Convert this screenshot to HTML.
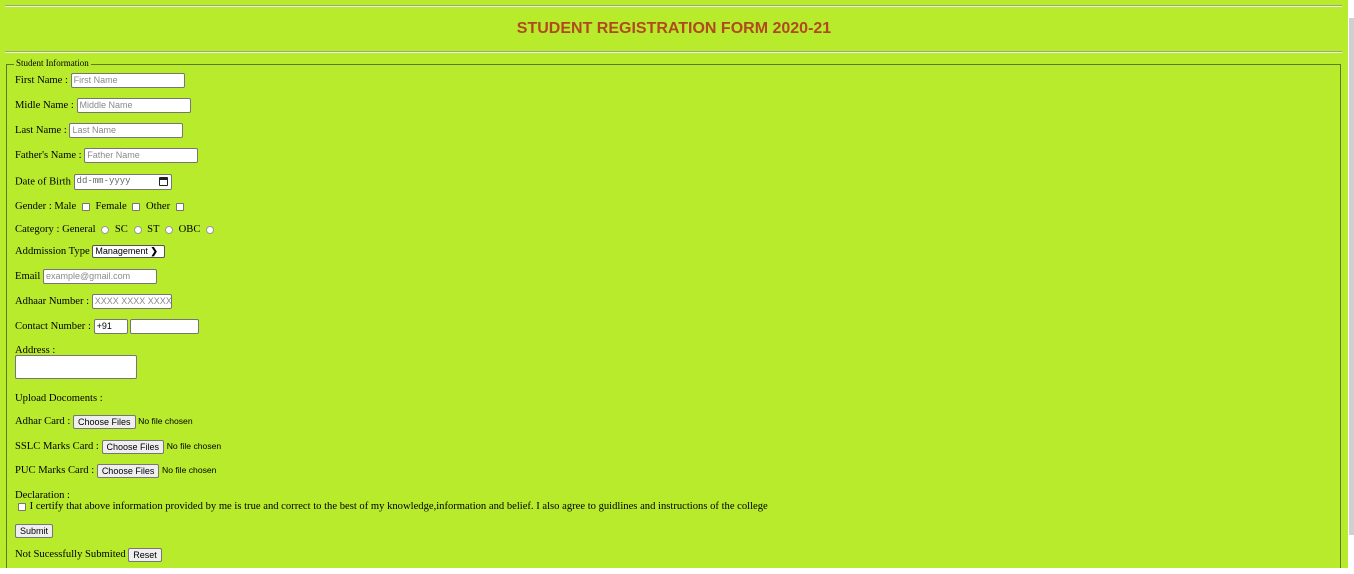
<!DOCTYPE html>
<html><head><meta charset="utf-8"><style>
*{box-sizing:border-box;margin:0;padding:0}
html,body{width:1354px;height:574px;overflow:hidden;background:#fff}
#pg{position:absolute;left:0;top:0;width:1348px;height:568px;background:#b8eb2b;overflow:hidden}
.hr{position:absolute;left:5px;width:1337px;height:2px;border-top:1px solid #9aa77a;border-bottom:1px solid #eef5dc}
h1{position:absolute;left:0;width:1348px;top:20px;text-align:center;font:bold 16px "Liberation Sans",sans-serif;color:#b04a1e}
.fs{position:absolute;left:6px;top:64px;width:1335px;height:520px;border:1px solid #5e7a1a}
.lg{position:absolute;left:14px;top:58px;padding:0 2px;background:#b8eb2b;font:9px "Liberation Serif",serif;color:#000}
.r{position:absolute;left:15px;margin-top:1px;font:10.6px "Liberation Serif",serif;color:#000;white-space:nowrap;height:16px;line-height:16px}
.in{display:inline-block;vertical-align:middle;height:15px;background:#fff;border:1px solid #767676;border-radius:2px;font:9px "Liberation Sans",sans-serif;color:#8a8a8a;line-height:13px;padding-left:2px;overflow:hidden}
.cb{display:inline-block;vertical-align:middle;width:8px;height:8px;background:#fff;border:1px solid #767676;border-radius:1px;margin:0 3px}
.rd{display:inline-block;vertical-align:middle;width:8px;height:8px;background:#fff;border:1px solid #999;border-radius:50%;margin:0 3px}
.bt{display:inline-block;vertical-align:middle;height:14px;background:#efefef;border:1px solid #767676;border-radius:2px;font:9px "Liberation Sans",sans-serif;color:#000;line-height:12px;padding:0 4px}
.nf{font:8.6px "Liberation Sans",sans-serif}
#sb{position:absolute;left:1349px;top:18px;width:5px;height:517px;background:#d0d0d0}
</style></head><body>
<div id="pg">
<div class="hr" style="top:5px"></div>
<h1>STUDENT REGISTRATION FORM 2020-21</h1>
<div class="hr" style="top:51px"></div>
<div class="fs"></div>
<div class="lg">Student Information</div>

<div class="r" style="top:72px">First Name : <span class="in" style="width:114px">First Name</span></div>
<div class="r" style="top:97px">Midle Name : <span class="in" style="width:114px">Middle Name</span></div>
<div class="r" style="top:122px">Last Name : <span class="in" style="width:114px">Last Name</span></div>
<div class="r" style="top:147px">Father's Name : <span class="in" style="width:114px">Father Name</span></div>
<div class="r" style="top:173px">Date of Birth <span class="in" style="width:98px;height:16px;font-family:'Liberation Mono',monospace;color:#666;position:relative">dd-mm-yyyy<span style="position:absolute;right:3px;top:2px;width:9px;height:9px;border:1.5px solid #222;border-top-width:3px;border-radius:1px"></span></span></div>
<div class="r" style="top:198px">Gender : Male <span class="cb"></span> Female <span class="cb"></span> Other <span class="cb"></span></div>
<div class="r" style="top:221px">Category : General <span class="rd"></span> SC <span class="rd"></span> ST <span class="rd"></span> OBC <span class="rd"></span></div>
<div class="r" style="top:243px">Addmission Type <span class="in" style="width:73px;height:13px;color:#000;line-height:11px;border-color:#555">Management <b style="font-size:9px">&#10095;</b></span></div>
<div class="r" style="top:268px">Email <span class="in" style="width:114px">example@gmail.com</span></div>
<div class="r" style="top:293px">Adhaar Number : <span class="in" style="width:80px">XXXX XXXX XXXX</span></div>
<div class="r" style="top:318px">Contact Number : <span class="in" style="width:34px;color:#000">+91</span> <span class="in" style="width:69px"></span></div>
<div class="r" style="top:342px">Address :</div>
<div style="position:absolute;left:15px;top:355px;width:122px;height:24px;background:#fff;border:1px solid #767676;border-radius:2px"></div>
<div class="r" style="top:390px">Upload Docoments :</div>
<div class="r" style="top:413px">Adhar Card : <span class="bt">Choose Files</span> <span class="nf">No file chosen</span></div>
<div class="r" style="top:438px">SSLC Marks Card : <span class="bt">Choose Files</span> <span class="nf">No file chosen</span></div>
<div class="r" style="top:462px">PUC Marks Card : <span class="bt">Choose Files</span> <span class="nf">No file chosen</span></div>
<div class="r" style="top:487px">Declaration :</div>
<div class="r" style="top:498px;font-size:10.6px">&nbsp;<span class="cb" style="margin:0 4px 0 0"></span>I certify that above information provided by me is true and correct to the best of my knowledge,information and belief. I also agree to guidlines and instructions of the college</div>
<div class="r" style="top:522px"><span class="bt">Submit</span></div>
<div class="r" style="top:546px">Not Sucessfully Submited <span class="bt">Reset</span></div>
</div>
<div id="sb"></div>
</body></html>
